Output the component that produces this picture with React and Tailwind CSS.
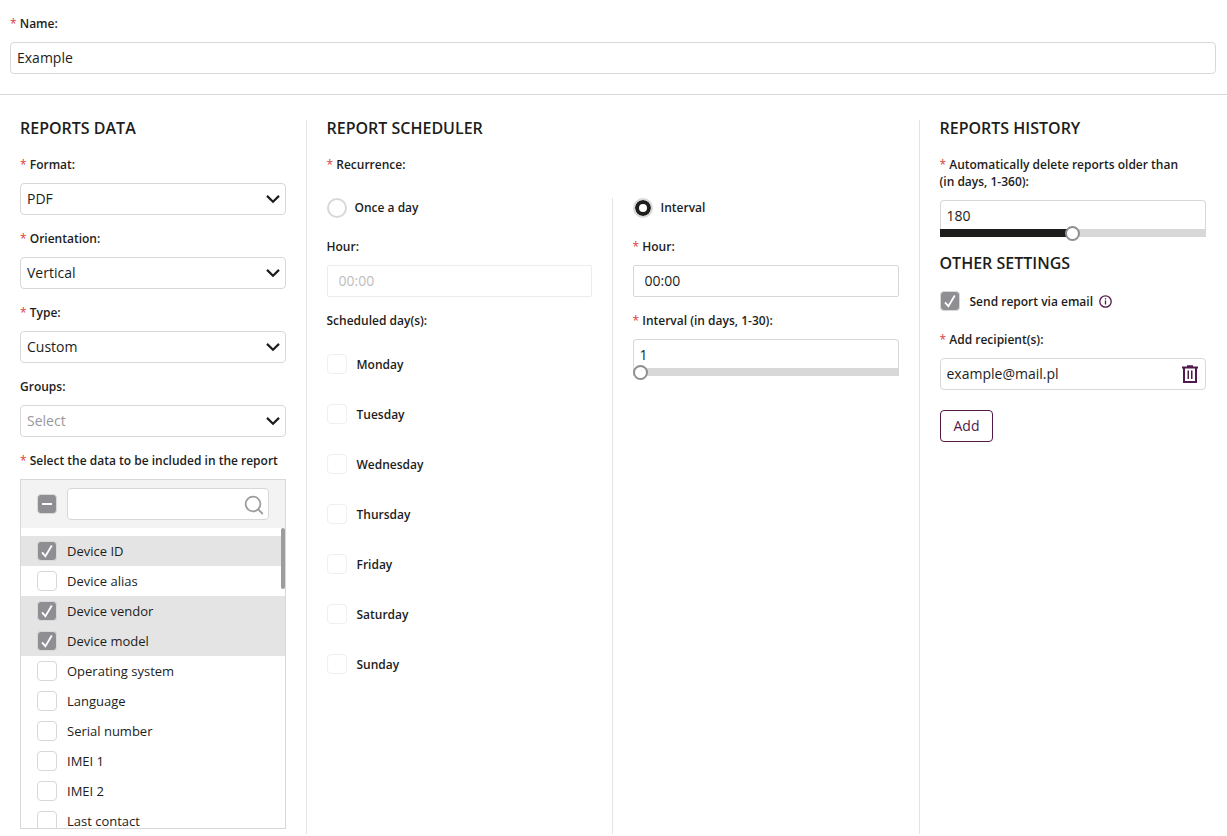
import { useState } from "react";

const FIELDS = [
  ["Device ID", true],
  ["Device alias", false],
  ["Device vendor", true],
  ["Device model", true],
  ["Operating system", false],
  ["Language", false],
  ["Serial number", false],
  ["IMEI 1", false],
  ["IMEI 2", false],
  ["Last contact", false],
];

const DAYS = ["Monday", "Tuesday", "Wednesday", "Thursday", "Friday", "Saturday", "Sunday"];

const BOX = "block h-8 w-full rounded-sm border border-[#d8d8d8] bg-white px-1.5 text-sm outline-none";

function Label({ htmlFor, required, children }) {
  return (
    <label htmlFor={htmlFor} className="mb-2.5 block text-xs/[17px] font-semibold">
      {required && <span className="font-normal text-[#d9403a]">* </span>}
      {children}
    </label>
  );
}

function Heading({ children }) {
  return <h2 className="mb-5 text-base/4 font-semibold">{children}</h2>;
}

function Checkbox({ id, checked, onChange, disabled, mixed, label }) {
  const on = checked || mixed;
  return (
    <span className="relative block size-5 shrink-0">
      <input
        id={id}
        type="checkbox"
        aria-label={label}
        checked={checked}
        disabled={disabled}
        onChange={onChange}
        className={
          "block size-5 appearance-none rounded-sm border " +
          (on
            ? "border-[#d8d8d8] bg-[#8f8e93]"
            : disabled
              ? "border-[#efefef] bg-white"
              : "border-[#d8d8d8] bg-white")
        }
      />
      {on && (
        <svg viewBox="0 0 20 20" fill="none" stroke="#fff" className="pointer-events-none absolute inset-0 size-5">
          {mixed ? <path d="M5 10h10" strokeWidth="2" /> : <path d="M5 11.3L8.4 15.2L14.8 4.5" strokeWidth="1.8" />}
        </svg>
      )}
    </span>
  );
}

function SelectField({ id, label, required, options, muted }) {
  return (
    <div className="mb-[15px]">
      <Label htmlFor={id} required={required}>
        {label}
      </Label>
      <div className="relative">
        <select id={id} className={BOX + " appearance-none pr-8 " + (muted ? "text-[#99989d]" : "")}>
          {options.map((o) => (
            <option key={o}>{o}</option>
          ))}
        </select>
        <svg
          viewBox="0 0 16 10"
          fill="none"
          stroke="#1d1d1b"
          strokeWidth="2.2"
          className="pointer-events-none absolute top-[11px] right-[5px] h-2.5 w-4"
        >
          <path d="M2 1.9L8 7.7L14 1.9" />
        </svg>
      </div>
    </div>
  );
}

function SliderField({ id, label, min, max, initial }) {
  const [value, setValue] = useState(initial);
  const pct = ((value - min) / (max - min)) * 100;
  return (
    <div>
      <Label htmlFor={id} required>
        {label}
      </Label>
      <input
        id={id}
        type="text"
        value={value}
        onChange={(e) => setValue(Number(e.target.value) || min)}
        className="block h-[29px] w-full rounded-t-sm border border-b-0 border-[#d8d8d8] bg-white px-1.5 text-sm outline-none"
      />
      <input
        type="range"
        aria-label="Days"
        min={min}
        max={max}
        value={value}
        onChange={(e) => setValue(Number(e.target.value))}
        style={{
          backgroundImage: `linear-gradient(to right, #1d1d1b ${pct}%, #d8d8d8 ${pct}%)`,
        }}
        className="block h-2 w-full appearance-none [&::-webkit-slider-thumb]:size-[15px] [&::-webkit-slider-thumb]:appearance-none [&::-webkit-slider-thumb]:rounded-full [&::-webkit-slider-thumb]:border-2 [&::-webkit-slider-thumb]:border-solid [&::-webkit-slider-thumb]:border-[#8f8e93] [&::-webkit-slider-thumb]:bg-white"
      />
    </div>
  );
}

function Radio({ id, checked, onChange, children }) {
  return (
    <div className="mb-5 flex items-start gap-2">
      <input
        id={id}
        type="radio"
        name="recurrence"
        checked={checked}
        onChange={onChange}
        className={
          "size-5 appearance-none rounded-full border-2 border-[#d8d8d8] bg-white " +
          "checked:shadow-[inset_0_0_0_4px_#1d1d1b]"
        }
      />
      <label htmlFor={id} className="text-xs/[19px] font-semibold">
        {children}
      </label>
    </div>
  );
}

export default function App() {
  const [fields, setFields] = useState(FIELDS);
  const [mode, setMode] = useState("interval");
  const [email, setEmail] = useState(true);

  const toggle = (i) => setFields(fields.map((f, j) => (j === i ? [f[0], !f[1]] : f)));

  return (
    <form className="bg-white font-['Open_Sans',sans-serif] text-[#1d1d1b]">
      <div className="border-b border-[#d8d8d8] pt-[15px] pr-[11px] pb-5 pl-2.5">
        <Label htmlFor="name" required>
          Name:
        </Label>
        <input id="name" type="text" defaultValue="Example" className={BOX + " pb-0.5"} />
      </div>

      <div className="grid grid-cols-4 pt-[25px] pr-px">
        <section className="border-r border-[#e4e4e4] px-5 pb-[5px]">
          <Heading>REPORTS DATA</Heading>
          <SelectField id="format" label="Format:" required options={["PDF"]} />
          <SelectField id="orientation" label="Orientation:" required options={["Vertical"]} />
          <SelectField id="type" label="Type:" required options={["Custom"]} />
          <SelectField id="groups" label="Groups:" options={["Select"]} muted />

          <Label htmlFor="field-search" required>
            Select the data to be included in the report
          </Label>
          <div className="border border-[#d8d8d8]">
            <div className="flex items-center gap-2.5 bg-[#f3f3f3] px-4 py-2">
              <Checkbox mixed checked={false} onChange={() => {}} label="Select all" />
              <div className="relative grow">
                <input id="field-search" type="text" className={BOX + " pr-8"} />
                <svg
                  viewBox="0 0 20 20"
                  fill="none"
                  stroke="#9d9d9d"
                  strokeWidth="1.8"
                  className="pointer-events-none absolute top-[7px] right-[5px] size-5"
                >
                  <circle cx="9" cy="9" r="7.4" />
                  <path d="M14 14.2L18.8 19" />
                </svg>
              </div>
            </div>
            <div className="relative">
              <ul className="h-[300px] overflow-y-auto pt-2 [scrollbar-width:none]">
                {fields.map(([name, on], i) => (
                  <li key={name} className={"flex h-[30px] items-center gap-2.5 px-4 " + (on ? "bg-[#e4e4e4]" : "")}>
                    <Checkbox id={"field-" + i} checked={on} onChange={() => toggle(i)} />
                    <label htmlFor={"field-" + i} className="text-[13px]/5">
                      {name}
                    </label>
                  </li>
                ))}
              </ul>
              <div className="absolute top-0 right-0 h-[61px] w-1 rounded-full bg-[#9d9d9d]" />
            </div>
          </div>
        </section>

        <section className="col-span-2 flex flex-col border-r border-[#e4e4e4]">
          <div className="px-5">
            <Heading>REPORT SCHEDULER</Heading>
            <p className="mb-[25px] text-xs/[17px] font-semibold">
              <span className="font-normal text-[#d9403a]">* </span>Recurrence:
            </p>
          </div>
          <div className="grid grow grid-cols-2">
            <div className="border-r border-[#e4e4e4] px-5">
              <Radio id="once" checked={mode === "once"} onChange={() => setMode("once")}>
                Once a day
              </Radio>
              <Label htmlFor="once-hour">Hour:</Label>
              <input
                id="once-hour"
                type="text"
                defaultValue="00:00"
                disabled
                className="mb-[15px] block h-8 w-full rounded-xs border border-[#ececec] bg-white px-[11px] pb-0.5 text-sm text-[#bdbdbd]"
              />
              <p className="mb-[25px] text-xs/[17px] font-semibold">Scheduled day(s):</p>
              <div className="flex flex-col gap-[30px]">
                {DAYS.map((d) => (
                  <div key={d} className="flex items-center gap-2.5">
                    <Checkbox id={d} checked={false} onChange={() => {}} disabled />
                    <label htmlFor={d} className="text-xs/[17px] font-semibold">
                      {d}
                    </label>
                  </div>
                ))}
              </div>
            </div>
            <div className="px-5">
              <Radio id="interval" checked={mode === "interval"} onChange={() => setMode("interval")}>
                Interval
              </Radio>
              <Label htmlFor="interval-hour" required>
                Hour:
              </Label>
              <input
                id="interval-hour"
                type="text"
                defaultValue="00:00"
                className="mb-[15px] block h-8 w-full rounded-xs border border-[#d8d8d8] bg-white px-[11px] pb-0.5 text-sm outline-none"
              />
              <SliderField id="interval-days" label="Interval (in days, 1-30):" min={1} max={30} initial={1} />
            </div>
          </div>
        </section>

        <section className="px-5">
          <Heading>REPORTS HISTORY</Heading>
          <SliderField
            id="retention"
            label={"Automatically delete reports older than (in\u00a0days, 1-360):"}
            min={1}
            max={360}
            initial={180}
          />
          <div className="pt-[18px]">
            <Heading>OTHER SETTINGS</Heading>
          </div>
          <div className="mb-5 flex items-center gap-2.5">
            <Checkbox id="send-email" checked={email} onChange={() => setEmail(!email)} />
            <label htmlFor="send-email" className="text-xs/[17px] font-semibold">
              Send report via email
            </label>
            <svg viewBox="0 0 13 13" fill="none" stroke="#511a4b" className="-ml-1 size-[13px]">
              <circle cx="6.5" cy="6.5" r="5.7" strokeWidth="1.3" />
              <path d="M6.5 5.6v4M6.5 3.3v1.3" strokeWidth="1.3" />
            </svg>
          </div>
          <Label htmlFor="recipient" required>
            Add recipient(s):
          </Label>
          <div className="relative mb-5">
            <input id="recipient" type="email" defaultValue="example@mail.pl" className={BOX + " pr-8 pb-0.5"} />
            <button type="button" aria-label="Remove recipient" className="absolute top-[7px] right-2">
              <svg viewBox="0 0 16 18" fill="none" stroke="#511a4b" className="block h-[18px] w-4">
                <path d="M0 2.5h16M5 1.2h6" strokeWidth="1.8" />
                <path d="M2 2.5V17h12V2.5" strokeWidth="2" />
                <path d="M6.25 5.5v8.5M9.75 5.5v8.5" strokeWidth="1.5" />
              </svg>
            </button>
          </div>
          <button
            type="button"
            className="block h-8 rounded-sm border border-[#511a4b] bg-white px-[13px] text-sm text-[#511a4b]"
          >
            Add
          </button>
        </section>
      </div>
    </form>
  );
}
